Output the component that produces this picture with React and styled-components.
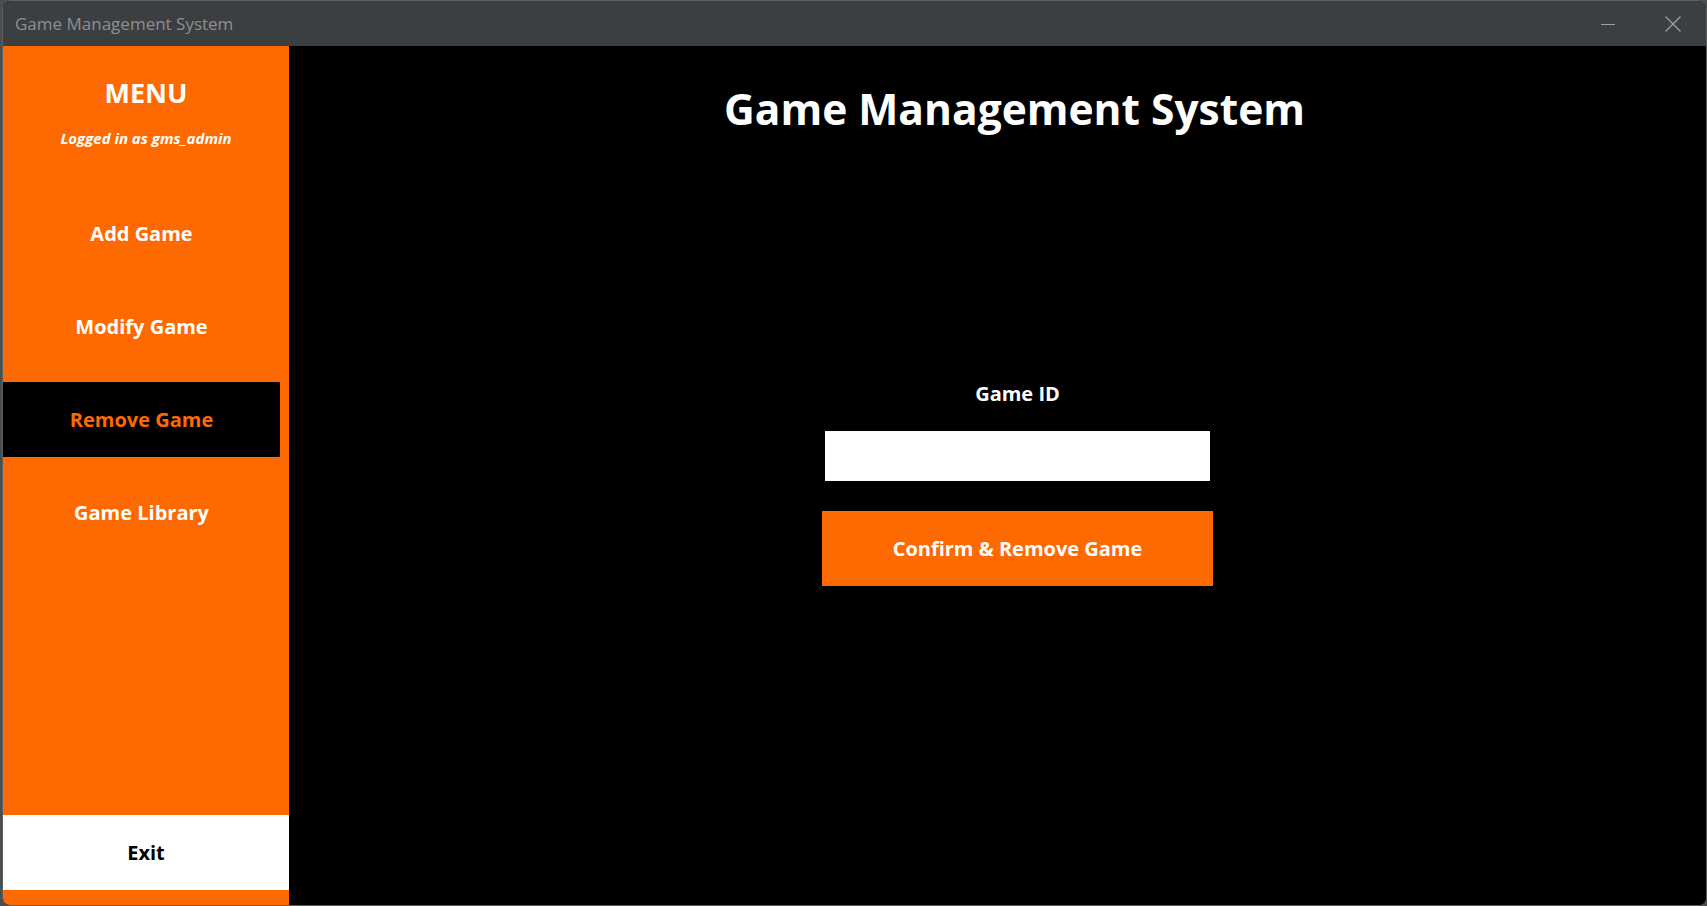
import React from 'react';
import styled, { createGlobalStyle } from 'styled-components';

const GlobalStyle = createGlobalStyle`
  html, body {
    margin: 0;
    padding: 0;
    height: 100%;
    background: #4b4d4f;
  }
  #root {
    height: 100%;
  }
`;

const FONT = `"Open Sans", "Noto Sans", sans-serif`;
const ORANGE = '#ff6a00';

const Window = styled.div`
  height: 906px;
  margin-left: 2px;
  display: flex;
  flex-direction: column;
  border: 1px solid #5c5f61;
  border-radius: 8px;
  overflow: hidden;
  box-sizing: border-box;
  background: #000;
`;

const TitleBar = styled.div`
  height: 45px;
  flex: 0 0 45px;
  background: #3c3f41;
  display: flex;
  align-items: center;
  justify-content: space-between;
  padding-left: 12px;
  font-family: ${FONT};
  font-size: 17px;
  color: #8d8f91;
`;

const WindowControls = styled.div`
  display: flex;
  height: 100%;
  padding-right: 2px;
`;

const ControlButton = styled.div`
  width: ${p => p.$w || 64}px;
  height: 100%;
  display: flex;
  align-items: center;
  justify-content: center;
`;

const Body = styled.div`
  flex: 1;
  display: flex;
  min-height: 0;
`;

const Sidebar = styled.aside`
  width: 286px;
  flex: 0 0 286px;
  background: ${ORANGE};
  display: flex;
  flex-direction: column;
  font-family: ${FONT};
  color: #fff;
`;

const MenuHeader = styled.div`
  display: flex;
  flex-direction: column;
  align-items: center;
  padding-top: 29px;
`;

const MenuTitle = styled.div`
  font-size: 27px;
  font-weight: 700;
  line-height: 36px;
`;

const LoggedIn = styled.div`
  margin-top: 17px;
  font-size: 15px;
  font-weight: 700;
  font-style: italic;
  line-height: 20px;
`;

const Nav = styled.nav`
  display: flex;
  flex-direction: column;
  gap: 18px;
  margin-top: 48px;
  padding-right: 9px;
`;

const NavItem = styled.div`
  height: 75px;
  display: flex;
  align-items: center;
  justify-content: center;
  font-size: 20px;
  font-weight: 700;
  background: ${p => (p.$active ? '#000' : 'transparent')};
  color: ${p => (p.$active ? ORANGE : '#fff')};
`;

const ExitButton = styled.div`
  margin-top: auto;
  margin-bottom: 15px;
  height: 75px;
  display: flex;
  align-items: center;
  justify-content: center;
  background: #fff;
  color: #000;
  font-size: 20px;
  font-weight: 700;
`;

const Main = styled.main`
  flex: 1;
  background: #000;
  display: flex;
  flex-direction: column;
  font-family: ${FONT};
  color: #fff;
`;

const Heading = styled.h1`
  margin: 35px 0 0;
  padding-left: 34px;
  text-align: center;
  font-size: 42.5px;
  font-weight: 700;
  line-height: 56px;
`;

const Form = styled.div`
  margin-top: 244px;
  padding-left: 40px;
  display: flex;
  flex-direction: column;
  align-items: center;
`;

const Label = styled.div`
  font-size: 20px;
  font-weight: 700;
  line-height: 26px;
`;

const TextInput = styled.input`
  margin-top: 24px;
  width: 385px;
  height: 50px;
  box-sizing: border-box;
  border: none;
  outline: none;
  background: #fff;
  font-family: ${FONT};
  font-size: 18px;
  padding: 0 10px;
`;

const PrimaryButton = styled.button`
  margin-top: 30px;
  width: 391px;
  height: 75px;
  border: none;
  background: ${ORANGE};
  color: #fff;
  font-family: ${FONT};
  font-size: 20px;
  font-weight: 700;
  cursor: pointer;
`;

const App = () => {
  const items = ['Add Game', 'Modify Game', 'Remove Game', 'Game Library'];
  return (
    <>
      <GlobalStyle />
      <Window>
        <TitleBar>
          <span>Game Management System</span>
          <WindowControls>
            <ControlButton $w={68}>
              <svg width="16" height="16" viewBox="0 0 16 16">
                <line x1="1" y1="8.5" x2="15" y2="8.5" stroke="#a0a2a4" strokeWidth="1" />
              </svg>
            </ControlButton>
            <ControlButton $w={62}>
              <svg width="18" height="18" viewBox="0 0 18 18">
                <path d="M1.5 1.5 L16.5 16.5 M16.5 1.5 L1.5 16.5" stroke="#a0a2a4" strokeWidth="1.2" />
              </svg>
            </ControlButton>
          </WindowControls>
        </TitleBar>
        <Body>
          <Sidebar>
            <MenuHeader>
              <MenuTitle>MENU</MenuTitle>
              <LoggedIn>Logged in as gms_admin</LoggedIn>
            </MenuHeader>
            <Nav>
              {items.map(item => (
                <NavItem key={item} $active={item === 'Remove Game'}>
                  {item}
                </NavItem>
              ))}
            </Nav>
            <ExitButton>Exit</ExitButton>
          </Sidebar>
          <Main>
            <Heading>Game Management System</Heading>
            <Form>
              <Label>Game ID</Label>
              <TextInput type="text" />
              <PrimaryButton>Confirm &amp; Remove Game</PrimaryButton>
            </Form>
          </Main>
        </Body>
      </Window>
    </>
  );
};

export default App;
